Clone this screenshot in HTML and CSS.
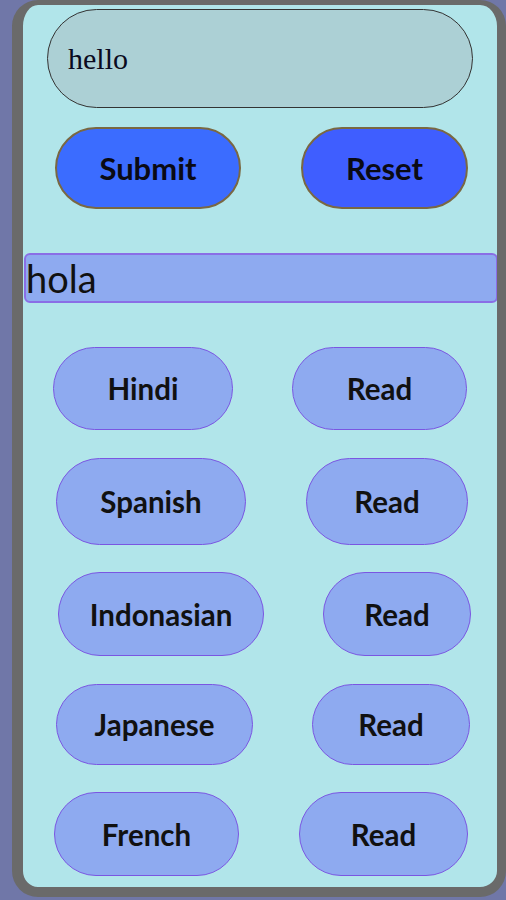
FILE: index.html
```html
<!DOCTYPE html>
<html>
<head>
<meta charset="utf-8">
<link rel="stylesheet" href="styles.css">
</head>
<body>
<div class="frame">
  <div class="input-box">hello</div>
  <div class="actions">
    <button class="action submit">Submit</button>
    <button class="action reset">Reset</button>
  </div>
  <div class="output">hola</div>
  <div class="lang-row r1">
    <button class="lang w-hindi">Hindi</button>
    <button class="lang w-read1">Read</button>
  </div>
  <div class="lang-row r2">
    <button class="lang w-spanish">Spanish</button>
    <button class="lang w-read2">Read</button>
  </div>
  <div class="lang-row r3">
    <button class="lang w-indo">Indonasian</button>
    <button class="lang w-read3">Read</button>
  </div>
  <div class="lang-row r4">
    <button class="lang w-jap">Japanese</button>
    <button class="lang w-read4">Read</button>
  </div>
  <div class="lang-row r5">
    <button class="lang w-french">French</button>
    <button class="lang w-read5">Read</button>
  </div>
</div>
</body>
</html>
```
FILE: styles.css
```css
html, body {
  margin: 0;
  padding: 0;
}
body {
  background: #7077a8;
  width: 506px;
  height: 900px;
  overflow: hidden;
}
.frame {
  margin-left: 12px;
  width: 494px;
  height: 897px;
  box-sizing: border-box;
  border-style: solid;
  border-color: #6a6a6a;
  border-width: 5px 9px 10px 11px;
  border-radius: 26px;
  background: #b1e5ea;
  display: flex;
  flex-direction: column;
  overflow: hidden;
}
.input-box {
  margin: 4px 0 0 24px;
  width: 426px;
  height: 99px;
  box-sizing: border-box;
  border: 1px solid #333;
  border-radius: 50px;
  background: #acd0d5;
  font-family: "Liberation Serif", serif;
  font-size: 30px;
  color: #0a0a20;
  padding-left: 20px;
  display: flex;
  align-items: center;
}
.actions {
  margin-top: 19px;
  display: flex;
  padding-left: 32px;
  gap: 60px;
}
.action {
  height: 82px;
  box-sizing: border-box;
  border: 2px solid #7a6842;
  border-radius: 42px;
  font-family: Lato, sans-serif;
  font-weight: 700;
  font-size: 31px;
  color: #0a0a14;
  padding: 0;
}
.submit {
  width: 186px;
  background: #3b6cff;
}
.reset {
  width: 167px;
  background: #3f5eff;
}
.output {
  margin: 44px 0 0 1px;
  width: 474px;
  height: 50px;
  box-sizing: border-box;
  border: 2px solid #8a6ee6;
  border-radius: 6px;
  background: #8eaaf0;
  font-family: Lato, sans-serif;
  font-size: 38px;
  color: #111;
  display: flex;
  align-items: center;
  padding-left: 0;
}
.lang-row {
  display: flex;
  justify-content: space-between;
}
.lang {
  box-sizing: border-box;
  border: 1px solid #7a56e2;
  border-radius: 44px;
  background: #8eaaf0;
  font-family: Lato, sans-serif;
  font-weight: 700;
  font-size: 29.5px;
  color: #111;
  padding: 0;
  height: 84px;
}
.r1 { margin-top: 44px; padding: 0 30px 0 30px; }
.r1 .lang { height: 83px; }
.r2 { margin-top: 28px; padding: 0 29px 0 33px; }
.r2 .lang { height: 87px; }
.r3 { margin-top: 27px; padding: 0 26px 0 35px; }
.r3 .lang { height: 84px; }
.r4 { margin-top: 28px; padding: 0 27px 0 33px; }
.r4 .lang { height: 81px; }
.r5 { margin-top: 27px; padding: 0 29px 0 31px; }
.r5 .lang { height: 84px; }
.w-hindi { width: 180px; }
.w-read1 { width: 175px; }
.w-spanish { width: 190px; }
.w-read2 { width: 162px; }
.w-indo { width: 206px; }
.w-read3 { width: 148px; }
.w-jap { width: 197px; }
.w-read4 { width: 158px; }
.w-french { width: 185px; }
.w-read5 { width: 169px; }
```
